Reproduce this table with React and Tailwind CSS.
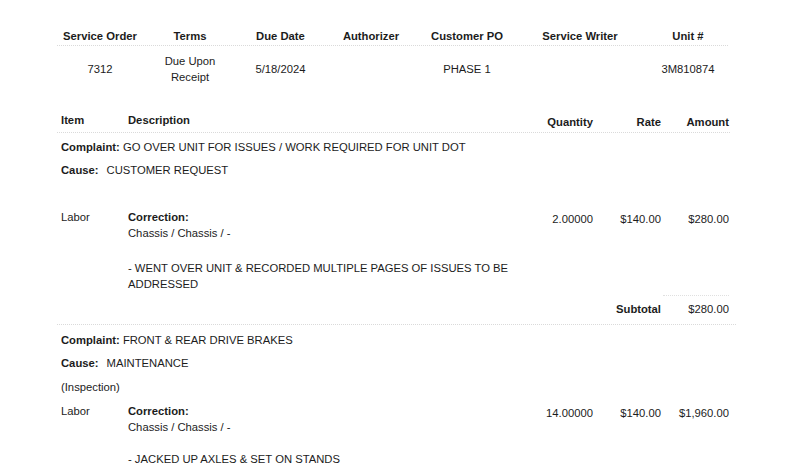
const headers = [
  { label: "Service Order", w: "w-[90px]" },
  { label: "Terms", w: "w-[90px]" },
  { label: "Due Date", w: "w-[91px]" },
  { label: "Authorizer", w: "w-[90px]" },
  { label: "Customer PO", w: "w-[102px]" },
  { label: "Service Writer", w: "w-[124px]" },
  { label: "Unit #", w: "w-[92px]" },
];

const values = [
  ["7312"],
  ["Due Upon", "Receipt"],
  ["5/18/2024"],
  [],
  ["PHASE 1"],
  [],
  ["3M810874"],
];

function Dots({ className = "" }) {
  return <div className={`border-t border-dotted border-[#dadada] ${className}`} />;
}

function LaborRow({ qty, rate, amount, lines, gap = "mt-[19px]" }) {
  return (
    <div className="flex">
      <div className="w-[67px]">Labor</div>
      <div className="flex-1">
        <p className="font-bold">Correction:</p>
        <p>Chassis / Chassis / -</p>
        <p className={gap}>
          {lines.map((l, i) => (
            <span key={i}>
              {l}
              {i < lines.length - 1 && <br />}
            </span>
          ))}
        </p>
      </div>
      <div className="w-[80px] pt-[2px] text-right">{qty}</div>
      <div className="w-[68px] pt-[2px] text-right">{rate}</div>
      <div className="w-[68px] pt-[2px] text-right">{amount}</div>
    </div>
  );
}

export default function App() {
  return (
    <div
      className="h-[466px] w-[798px] overflow-hidden bg-white text-[11.25px] leading-[16px] text-[#1c1c1c]"
      style={{ fontFamily: '"Liberation Sans", Arial, sans-serif' }}
    >
      {/* Order info header */}
      <div className="pl-[55px] pt-[28px]">
        <div className="flex font-bold">
          {headers.map((h) => (
            <div key={h.label} className={`${h.w} text-center`}>
              {h.label}
            </div>
          ))}
        </div>
      </div>
      <Dots className="ml-[57px] mr-[70px] mt-[1px]" />
      <div className="flex h-[32px] items-center pl-[55px] mt-[7px]">
        {headers.map((h, i) => (
          <div key={h.label} className={`${h.w} text-center`}>
            {values[i].map((v) => (
              <div key={v}>{v}</div>
            ))}
          </div>
        ))}
      </div>

      {/* Line items */}
      <div className="pl-[61px] pr-[69px]">
        <div className="mt-[27px] flex font-bold">
          <div className="w-[67px]">Item</div>
          <div className="flex-1">Description</div>
          <div className="w-[80px] pt-[2px] text-right">Quantity</div>
          <div className="w-[68px] pt-[2px] text-right">Rate</div>
          <div className="w-[68px] pt-[2px] text-right">Amount</div>
        </div>
      </div>
      <Dots className="ml-[57px] mr-[68px] mt-[2px]" />
      <div className="pl-[61px] pr-[69px]">
        <p className="mt-[6px]">
          <span className="font-bold">Complaint:</span> GO OVER UNIT FOR ISSUES / WORK REQUIRED FOR UNIT DOT
        </p>
        <p className="mt-[7px]">
          <span className="font-bold">Cause:</span>
          <span className="ml-[8px]">CUSTOMER REQUEST</span>
        </p>
        <div className="mt-[31px]">
          <LaborRow
            qty="2.00000"
            rate="$140.00"
            amount="$280.00"
            lines={["- WENT OVER UNIT & RECORDED MULTIPLE PAGES OF ISSUES TO BE", "ADDRESSED"]}
          />
        </div>
        <div className="mt-[3px] flex justify-end">
          <div className="w-[66px] border-t border-dotted border-[#e0e0e0]" />
        </div>
        <div className="mt-[5px] flex justify-end">
          <div className="w-[68px] text-right font-bold">Subtotal</div>
          <div className="w-[68px] text-right">$280.00</div>
        </div>
      </div>
      <Dots className="ml-[57px] mr-[62px] mt-[7px]" />
      <div className="pl-[61px] pr-[69px]">
        <p className="mt-[7px]">
          <span className="font-bold">Complaint:</span> FRONT &amp; REAR DRIVE BRAKES
        </p>
        <p className="mt-[7px]">
          <span className="font-bold">Cause:</span>
          <span className="ml-[8px]">MAINTENANCE</span>
        </p>
        <p className="mt-[8px]">(Inspection)</p>
        <div className="mt-[8px]">
          <LaborRow
            qty="14.00000"
            rate="$140.00"
            amount="$1,960.00"
            gap="mt-[16px]"
            lines={["- JACKED UP AXLES & SET ON STANDS"]}
          />
        </div>
      </div>
    </div>
  );
}
